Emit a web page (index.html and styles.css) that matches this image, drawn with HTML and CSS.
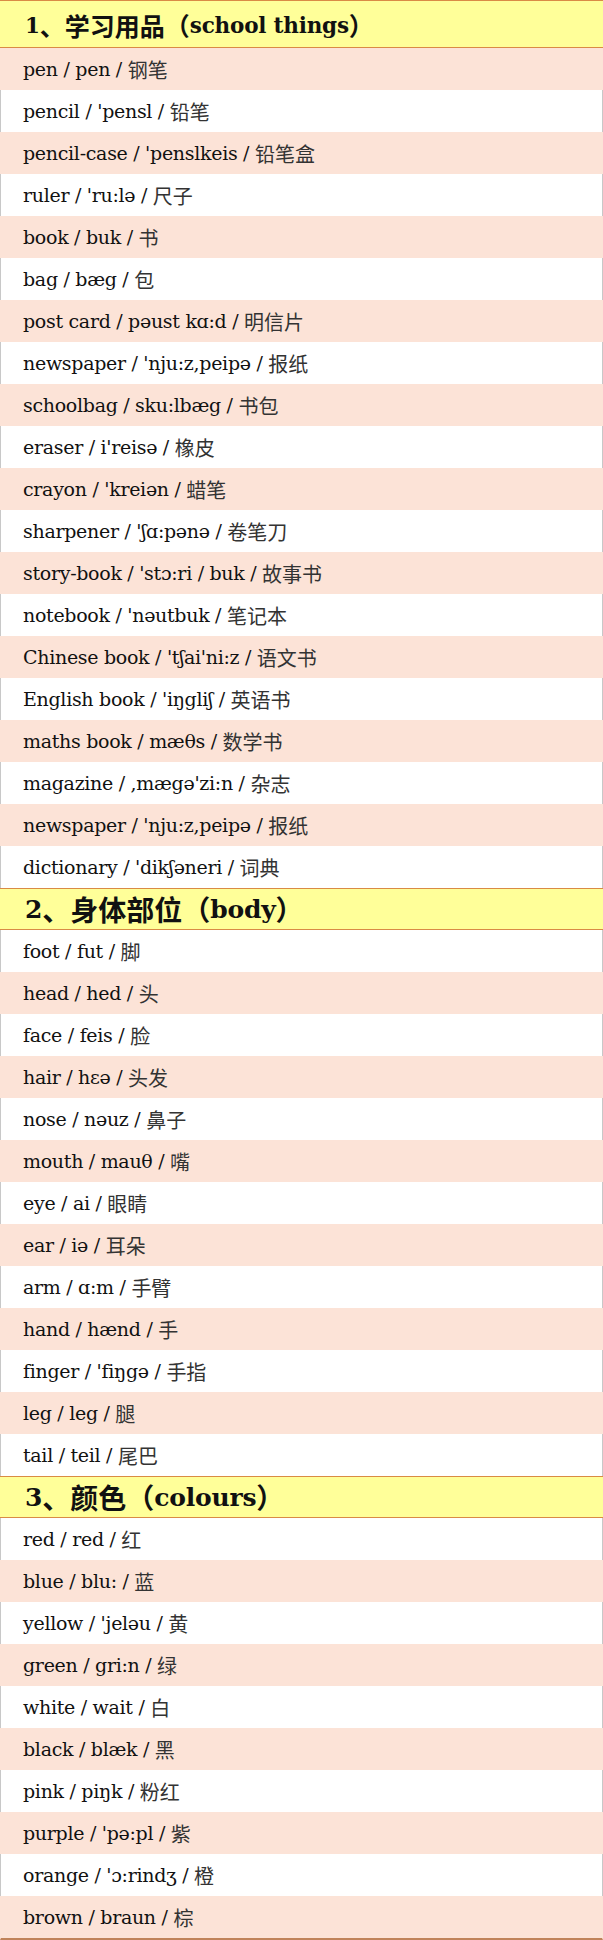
FILE: index.html
```html
<!DOCTYPE html>
<html lang="zh-CN">
<head>
<meta charset="utf-8">
<title>单词表</title>
<link rel="stylesheet" href="styles.css">
</head>
<body>
<div class="sheet">
  <div class="head first"><span class="n">1</span><span class="cn">、学习用品（</span>school things<span class="cn">）</span></div>
  <div class="row a">pen / pen / <span class="cn">钢笔</span></div>
  <div class="row b">pencil / 'pensl / <span class="cn">铅笔</span></div>
  <div class="row a">pencil-case / 'penslkeis / <span class="cn">铅笔盒</span></div>
  <div class="row b">ruler / 'ru:lə / <span class="cn">尺子</span></div>
  <div class="row a">book / buk / <span class="cn">书</span></div>
  <div class="row b">bag / bæg / <span class="cn">包</span></div>
  <div class="row a">post card / pəust kɑ:d / <span class="cn">明信片</span></div>
  <div class="row b">newspaper / 'nju:z,peipə / <span class="cn">报纸</span></div>
  <div class="row a">schoolbag / sku:lbæg / <span class="cn">书包</span></div>
  <div class="row b">eraser / i'reisə / <span class="cn">橡皮</span></div>
  <div class="row a">crayon / 'kreiən / <span class="cn">蜡笔</span></div>
  <div class="row b">sharpener / 'ʃɑ:pənə / <span class="cn">卷笔刀</span></div>
  <div class="row a">story-book / 'stɔ:ri / buk / <span class="cn">故事书</span></div>
  <div class="row b">notebook / 'nəutbuk / <span class="cn">笔记本</span></div>
  <div class="row a">Chinese book / 'tʃai'ni:z / <span class="cn">语文书</span></div>
  <div class="row b">English book / 'iŋgliʃ / <span class="cn">英语书</span></div>
  <div class="row a">maths book / mæθs / <span class="cn">数学书</span></div>
  <div class="row b">magazine / ,mægə'zi:n / <span class="cn">杂志</span></div>
  <div class="row a">newspaper / 'nju:z,peipə / <span class="cn">报纸</span></div>
  <div class="row b">dictionary / 'dikʃəneri / <span class="cn">词典</span></div>

  <div class="head big"><span class="n">2</span><span class="cn">、身体部位（</span>body<span class="cn">）</span></div>
  <div class="row b">foot / fut / <span class="cn">脚</span></div>
  <div class="row a">head / hed / <span class="cn">头</span></div>
  <div class="row b">face / feis / <span class="cn">脸</span></div>
  <div class="row a">hair / hɛə / <span class="cn">头发</span></div>
  <div class="row b">nose / nəuz / <span class="cn">鼻子</span></div>
  <div class="row a">mouth / mauθ / <span class="cn">嘴</span></div>
  <div class="row b">eye / ai / <span class="cn">眼睛</span></div>
  <div class="row a">ear / iə / <span class="cn">耳朵</span></div>
  <div class="row b">arm / ɑ:m / <span class="cn">手臂</span></div>
  <div class="row a">hand / hænd / <span class="cn">手</span></div>
  <div class="row b">finger / 'fiŋgə / <span class="cn">手指</span></div>
  <div class="row a">leg / leg / <span class="cn">腿</span></div>
  <div class="row b">tail / teil / <span class="cn">尾巴</span></div>

  <div class="head big"><span class="n">3</span><span class="cn">、颜色（</span>colours<span class="cn">）</span></div>
  <div class="row b">red / red / <span class="cn">红</span></div>
  <div class="row a">blue / blu: / <span class="cn">蓝</span></div>
  <div class="row b">yellow / 'jeləu / <span class="cn">黄</span></div>
  <div class="row a">green / gri:n / <span class="cn">绿</span></div>
  <div class="row b">white / wait / <span class="cn">白</span></div>
  <div class="row a">black / blæk / <span class="cn">黑</span></div>
  <div class="row b">pink / piŋk / <span class="cn">粉红</span></div>
  <div class="row a">purple / 'pə:pl / <span class="cn">紫</span></div>
  <div class="row b">orange / 'ɔ:rindʒ / <span class="cn">橙</span></div>
  <div class="row a last">brown / braun / <span class="cn">棕</span></div>
</div>
</body>
</html>
```

FILE: styles.css
```css
html, body {
  margin: 0;
  padding: 0;
  background: #ffffff;
}

.sheet {
  width: 603px;
  font-family: "DejaVu Serif", "Liberation Serif", "Noto Sans CJK SC", serif;
  color: #111111;
}

.head {
  box-sizing: border-box;
  height: 42px;
  display: flex;
  align-items: center;
  padding-left: 25px;
  background: #ffff99;
  border-top: 1px solid #d98b45;
  border-bottom: 1px solid #d98b45;
  font-size: 21.5px;
  font-weight: bold;
  white-space: pre;
  letter-spacing: -0.2px;
}

.head.first {
  height: 48px;
  padding-top: 2px;
}

.head .cn {
  font-family: "Noto Sans CJK SC", sans-serif;
  font-weight: bold;
  font-size: 25px;
  color: #111111;
  letter-spacing: 0;
}

.head.big {
  font-size: 25px;
}

.head.big .cn {
  font-size: 28px;
}

.row {
  box-sizing: border-box;
  height: 42px;
  display: flex;
  align-items: center;
  padding-left: 22px;
  font-size: 19px;
  letter-spacing: -0.3px;
  white-space: pre;
  border-left: 1px solid #c8c8c8;
  border-right: 1px solid #c8c8c8;
}

.row.a {
  background: #fce3d7;
  border-left-color: #fce3d7;
  border-right-color: #fce3d7;
}

.row.b {
  background: #ffffff;
}

.row.last {
  height: 44px;
  border-bottom: 2px solid #c0835a;
}

.row .cn {
  font-family: "Noto Sans CJK SC", sans-serif;
  color: #333333;
  font-size: 20px;
  letter-spacing: 0;
}
```
